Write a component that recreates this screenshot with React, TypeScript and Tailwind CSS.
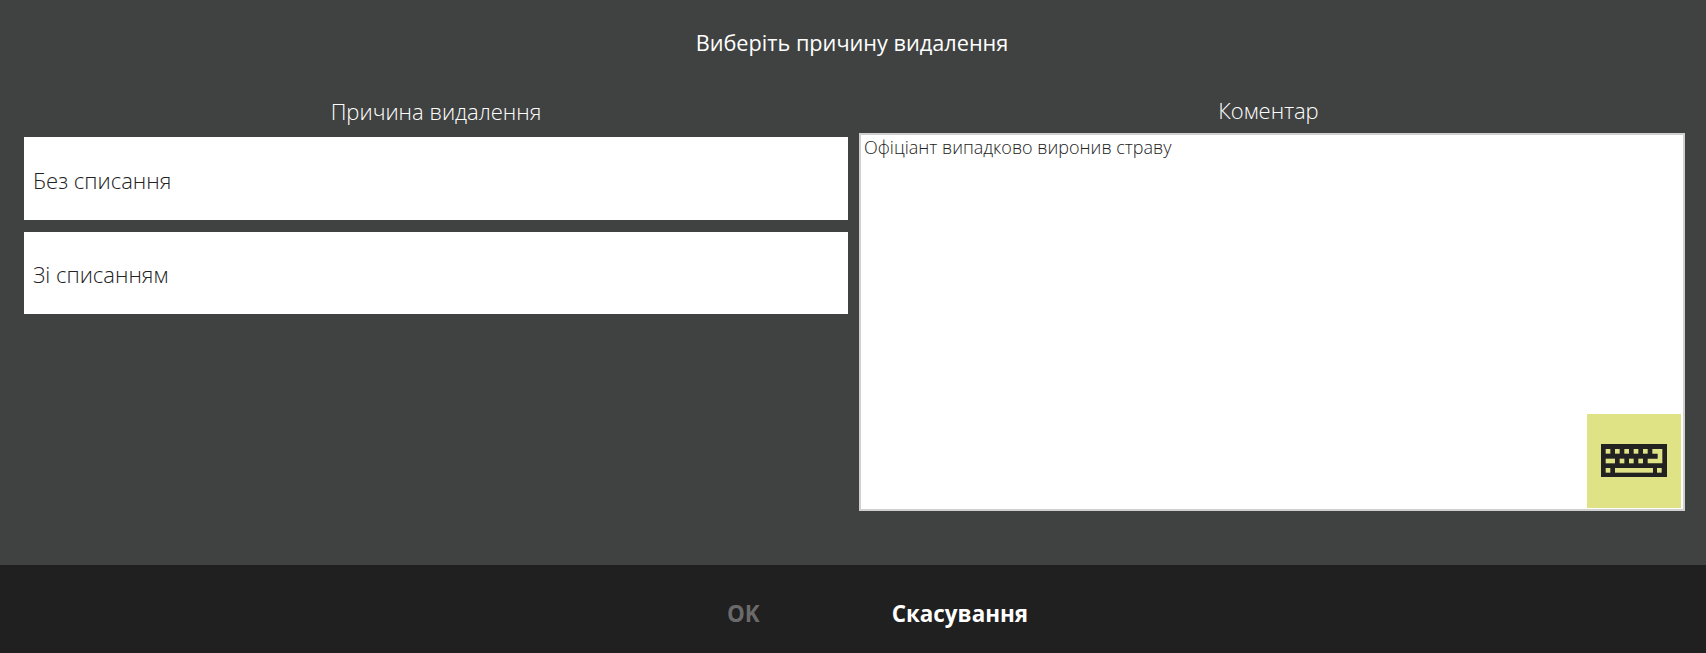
import React from 'react';

const KEY = '#dfe285';

const KeyboardIcon = () => (
  <svg width="66" height="33" viewBox="0 0 66 33" aria-hidden="true">
    <rect width="66" height="33" fill="#222222" />
    {[4.67, 14, 23.33, 32.67, 42].map((x) => (
      <rect key={x} x={x} y="5" width="4.67" height="4.67" fill={KEY} />
    ))}
    <path d="M51.33 5H61.33V19.33H46.67V14.67H56.67V9.67H51.33Z" fill={KEY} />
    <rect x="4.67" y="14.67" width="9.33" height="4.67" fill={KEY} />
    {[18.67, 28, 37.33].map((x) => (
      <rect key={x} x={x} y="14.67" width="4.67" height="4.67" fill={KEY} />
    ))}
    <rect x="4.67" y="24" width="4.67" height="4.67" fill={KEY} />
    <rect x="14" y="24" width="38" height="4.67" fill={KEY} />
    <rect x="56" y="24" width="4.67" height="4.67" fill={KEY} />
  </svg>
);

const reasons = ['Без списання', 'Зі списанням'];

export default function App() {
  return (
    <div className="flex h-[653px] w-full flex-col overflow-hidden bg-[#404241] font-['Open_Sans','Noto_Sans',sans-serif] text-white">
      <div className="flex h-[86px] shrink-0 items-center justify-center pr-[2px] text-[21.7px] font-normal">
        Виберіть причину видалення
      </div>
      <div className="flex flex-1 gap-[11px] pl-6 pr-[21px]">
        <div className="w-[824px] shrink-0">
          <div className="flex h-[51px] items-center justify-center pb-[1px] text-[22px] font-light">
            Причина видалення
          </div>
          <div className="flex flex-col gap-3">
            {reasons.map((reason) => (
              <button
                key={reason}
                className="flex h-[82.5px] w-full items-center bg-white px-[9px] pt-[4px] text-left text-[22px] font-light text-[#222222]"
              >
                {reason}
              </button>
            ))}
          </div>
        </div>
        <div className="flex w-[826px] shrink-0 flex-col">
          <div className="flex h-[47px] items-center justify-center pt-[1px] pr-[7px] text-[22px] font-light">
            Коментар
          </div>
          <div className="relative h-[378px] border-2 border-[#d0d0d0] bg-white px-[3px] text-[18px] leading-[25px] font-light text-[#222222]">
            Офіціант випадково виронив страву
            <button className="absolute right-[2px] bottom-[1px] flex h-[94px] w-[94px] items-center justify-center bg-[#dfe285] pb-[1px]">
              <KeyboardIcon />
            </button>
          </div>
        </div>
      </div>
      <div className="flex h-[88px] shrink-0 items-center bg-[#202020] pt-[9px] text-[22.4px] font-bold">
        <span className="ml-[727px] text-[#6a6a6a]">OK</span>
        <span className="ml-[132px]">Скасування</span>
      </div>
    </div>
  );
}
